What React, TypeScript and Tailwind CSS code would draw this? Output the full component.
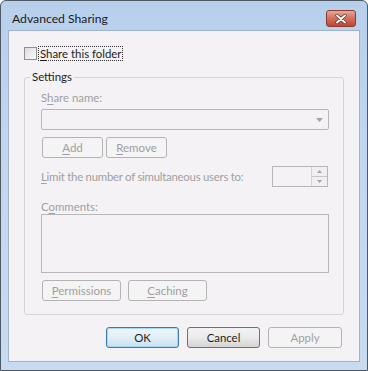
import React from "react";

const font = { fontFamily: 'Lato, "Noto Sans", "DejaVu Sans", sans-serif' };

function DisabledButton({ label, u, w }: { label: string; u: number; w: string }) {
  const a = label.slice(0, u);
  const b = label.slice(u, u + 1);
  const c = label.slice(u + 1);
  return (
    <div
      className={`${w} h-[21px] flex items-center justify-center rounded-[3px] border border-[#b5b2b5] bg-[#f4f4f4] text-[11.5px] text-[#a19fa3] whitespace-nowrap`}
    >
      <span>
        {a}
        <span className="underline underline-offset-2">{b}</span>
        {c}
      </span>
    </div>
  );
}

export default function App() {
  return (
    <div
      className="w-[368px] h-[371px] overflow-hidden rounded-t-[6px] border border-[#4d5a66] bg-gradient-to-b from-[#b8d0ec] via-[#c4d7ef] to-[#c9dbf1] flex flex-col"
      style={font}
    >
      {/* Title bar */}
      <div className="h-[29px] flex items-start justify-between pl-[11px] pr-[11px]">
        <div className="mt-[10px] text-[12.2px] leading-[16px] text-[#1b1b1b]">Advanced Sharing</div>
        <div className="mt-[9px] w-[30px] h-[17px] rounded-[3px] border border-[#8a3d35] bg-gradient-to-b from-[#e8a898] via-[#d0705c] to-[#c2442e] flex items-center justify-center">
          <svg width="12" height="10" viewBox="0 0 12 10">
            <path d="M2 1.5 L10 8.5 M10 1.5 L2 8.5" stroke="#5a2018" strokeWidth="3.2" strokeLinecap="round" />
            <path d="M2 1.5 L10 8.5 M10 1.5 L2 8.5" stroke="#ffffff" strokeWidth="2" strokeLinecap="round" />
          </svg>
        </div>
      </div>

      {/* Client area */}
      <div className="mx-[7px] mb-[8px] flex-1 bg-[#f4f2f5] border border-[#9fb4cf] flex flex-col pl-[15px] pr-[16px] text-[11.4px] whitespace-nowrap">
        {/* Checkbox */}
        <div className="mt-[15px] h-[14px] flex items-center">
          <div className="w-[13px] h-[13px] border border-[#8e8f8f] bg-gradient-to-br from-[#dcdcdc] to-[#fbfbfb]" />
          <div className="ml-[1px] px-[1px] h-[15px] flex items-center border border-dotted border-[#333] leading-[13px] text-[#1e1e1e]">
            <span>
              <span className="underline underline-offset-2">S</span>hare this folder
            </span>
          </div>
        </div>

        {/* Group box */}
        <div className="relative mt-[17px] w-[320px] h-[238px] rounded-[3px] border border-[#d5d3d8] pl-[16px] pr-[14px] pt-[13px] flex flex-col">
          <div className="absolute left-[5px] -top-[8px] px-[2px] bg-[#f4f2f5] leading-[14px] text-[#1e1e1e]">Settings</div>

          <div className="leading-[14px] text-[#a19fa3]">
            S<span className="underline underline-offset-2">h</span>are name:
          </div>
          <div className="mt-[4px] w-[288px] h-[21px] rounded-[2px] border border-[#b9b6ba] bg-[#f4f2f5] flex items-center justify-end pr-[5px]">
            <svg width="7" height="4" viewBox="0 0 7 4">
              <path d="M0 0 L7 0 L3.5 4 Z" fill="#a3a3a3" />
            </svg>
          </div>

          <div className="mt-[7px] flex gap-[3px] pl-[1px]">
            <DisabledButton label="Add" u={0} w="w-[61px]" />
            <DisabledButton label="Remove" u={0} w="w-[61px]" />
          </div>

          <div className="mt-[8px] h-[21px] flex items-center justify-between w-[287px]">
            <span className="text-[#a19fa3] tracking-[-0.25px]">
              <span className="underline underline-offset-2">L</span>imit the number of simultaneous users to:
            </span>
            <div className="w-[56px] h-[21px] border border-[#b9b6ba] flex justify-end">
              <div className="w-[16px] h-full flex flex-col border-l border-[#d5d3d8]">
                <div className="flex-1 flex items-center justify-center border-b border-[#c8c6ca] bg-[#f0eff1]">
                  <svg width="5" height="3" viewBox="0 0 5 3">
                    <path d="M0 3 L5 3 L2.5 0 Z" fill="#a3a3a3" />
                  </svg>
                </div>
                <div className="flex-1 flex items-center justify-center bg-[#f0eff1]">
                  <svg width="5" height="3" viewBox="0 0 5 3">
                    <path d="M0 0 L5 0 L2.5 3 Z" fill="#a3a3a3" />
                  </svg>
                </div>
              </div>
            </div>
          </div>

          <div className="mt-[14px] leading-[12px] text-[#a19fa3]">
            C<span className="underline underline-offset-2">o</span>mments:
          </div>
          <div className="mt-[1px] w-[288px] h-[59px] border border-[#b9b6ba] bg-[#f4f2f5]" />

          <div className="mt-[7px] flex gap-[7px] pl-[1px]">
            <DisabledButton label="Permissions" u={0} w="w-[79px]" />
            <DisabledButton label="Caching" u={0} w="w-[79px]" />
          </div>
        </div>

        {/* Bottom buttons */}
        <div className="mt-[12px] flex justify-end gap-[8px] pr-[1px]">
          <div className="w-[73px] h-[21px] rounded-[3px] border border-[#3d7bad] bg-gradient-to-b from-[#eef6fb] via-[#e1eef7] to-[#c7e0f0] flex items-center justify-center text-[#1e1e1e] shadow-[inset_0_0_0_1px_#a9d8f5]">
            OK
          </div>
          <div className="w-[73px] h-[21px] rounded-[3px] border border-[#707070] bg-gradient-to-b from-[#f2f2f2] via-[#ebebeb] to-[#d4d4d4] flex items-center justify-center text-[#1e1e1e]">
            Cancel
          </div>
          <div className="w-[74px] h-[21px] rounded-[3px] border border-[#b5b2b5] bg-[#f4f4f4] flex items-center justify-center text-[#a19fa3]">
            Apply
          </div>
        </div>
      </div>
    </div>
  );
}
